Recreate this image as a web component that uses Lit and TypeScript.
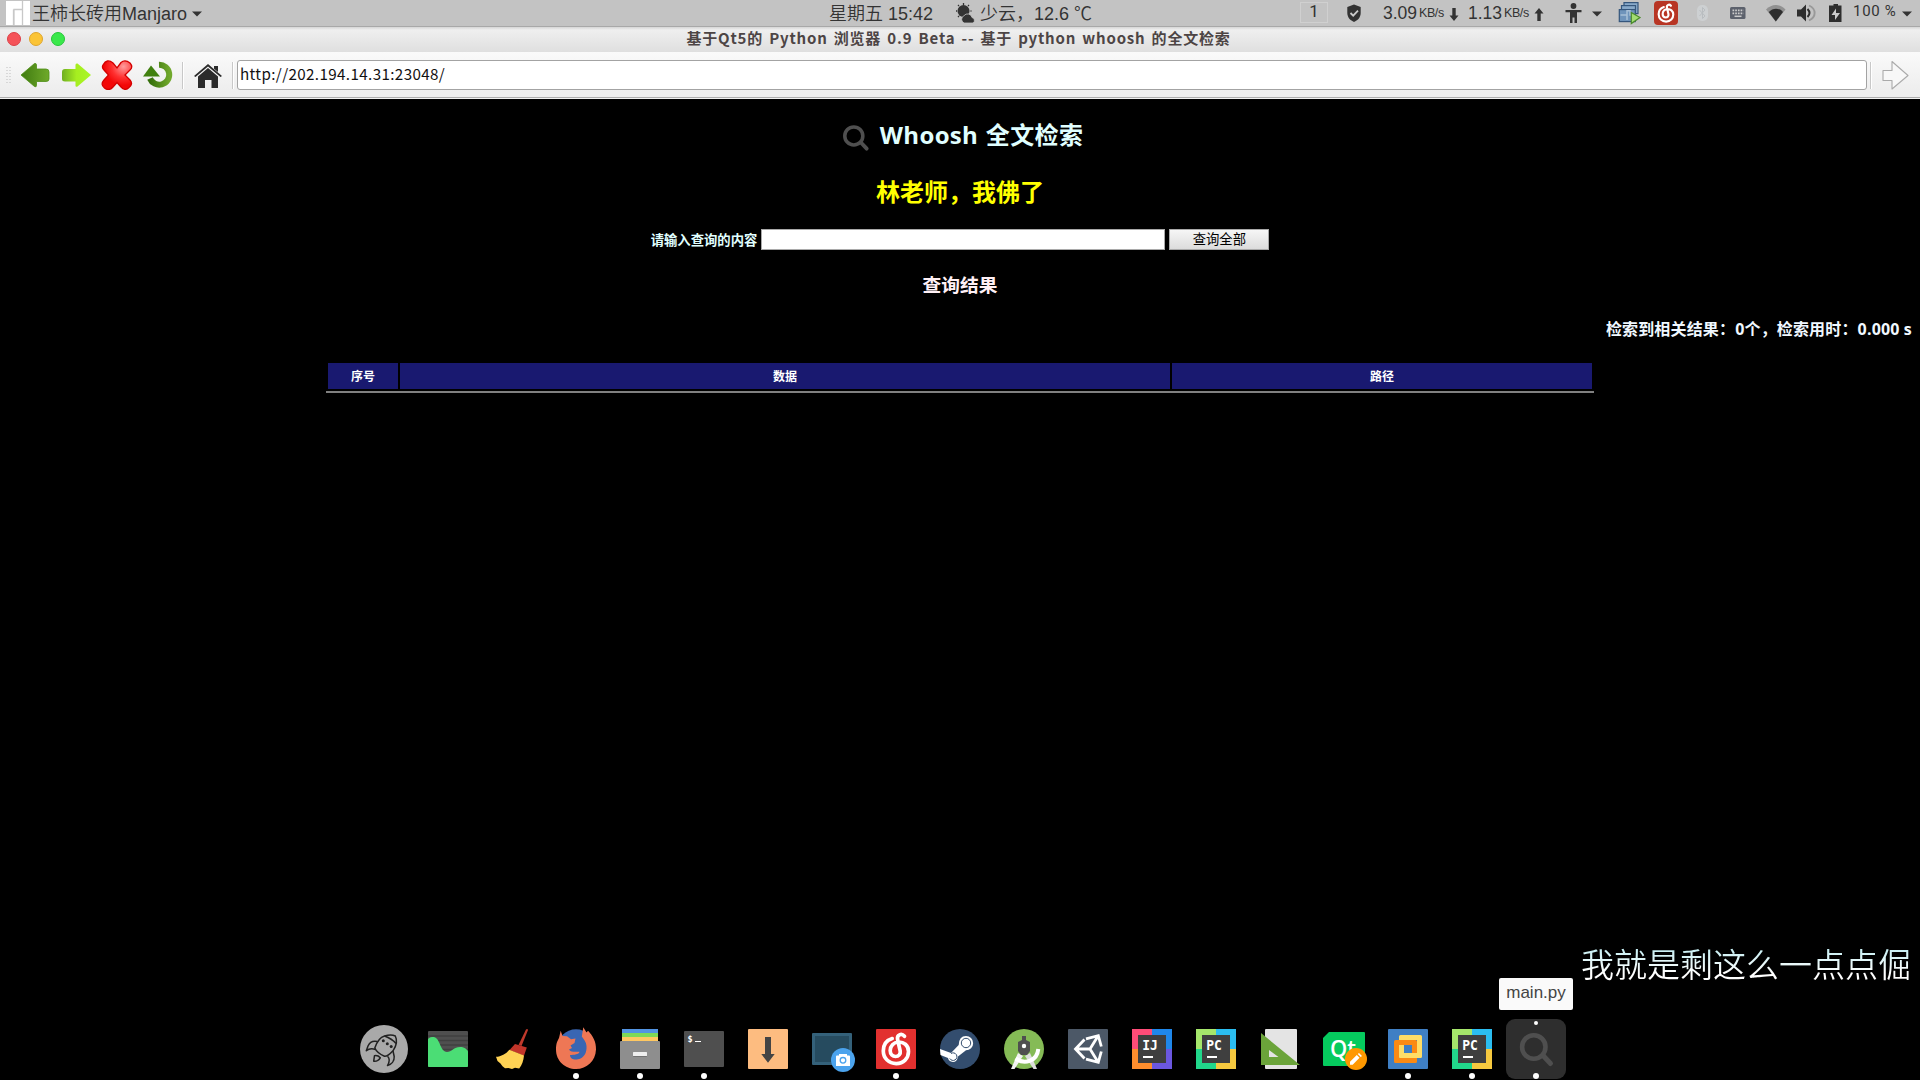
import { LitElement, html, svg, css } from "lit";
import { customElement, property } from "lit/decorators.js";

const ide = (tl: string, tr: string, bl: string, br: string, name: string) => svg`
  <rect x="4" y="4" width="20" height="20" fill=${tl} /><rect x="24" y="4" width="20" height="20" fill=${tr} />
  <rect x="4" y="24" width="20" height="20" fill=${bl} /><rect x="24" y="24" width="20" height="20" fill=${br} />
  <rect x="10" y="10" width="28" height="28" fill="#3f3f3f" />
  <text x="14.2" y="25.3" font-family="DejaVu Sans Mono, monospace" font-weight="700" font-size="13.4" textLength="15.6" lengthAdjust="spacingAndGlyphs" fill="#fff">${name}</text>
  <rect x="15" y="31" width="10" height="2" fill="#fff" />`;

const netease = svg`<path d="M20.2 13.6C14 15.500 11.300 20.500 11.300 26C11.300 33.300 17 38.600 24.200 38.600C31.500 38.600 36.500 33.300 36.500 26.500C36.500 20 31.500 16.800 26.500 17C21.500 17.200 18.200 21 18.200 25.600C18.200 29.500 20.800 31.500 23.500 31.500C26.800 31.500 28.700 29 28.200 26L25.600 14.500C24.600 9.800 29.500 7.800 32.500 11.300" fill="none" stroke="#fff" stroke-width="3.700" stroke-linecap="round" />`;

const glass = svg`<circle cx="21.800" cy="22" r="11.700" fill="none" stroke="#4f4f4f" stroke-width="4.600" /><path d="M31 30.500L38.500 38.500" stroke="#4f4f4f" stroke-width="5" stroke-linecap="round" />`;

const icons: Record<string, unknown> = {
  rocket: svg`<circle cx="24" cy="24" r="24" fill="#a9a9a9" />
    <g fill="none" stroke="#222" stroke-width="1.500" stroke-linejoin="round">
      <path d="M14.800 23C16.500 18 19 12.500 24.500 11C28 10 32 9.500 35.300 11C37.300 15 36.300 21 33 25.800C30.500 28.500 28 31.500 24.500 31.300C20.500 29.500 16.500 27 14.800 23Z" />
      <path d="M24.500 11C28.500 12.500 33 15 36 18.500" />
      <path d="M17.500 16.500C13 15.500 9.500 17.500 8 21L6.300 25.800C9 23.500 12.500 23.500 15.500 24.500M27.500 31.200C30 33.500 29.500 37 27.500 40.500C31.500 39.500 34.500 36 34.200 31.500L33 26M14.500 30.700L13.700 36.200C16.500 36.500 19 35 20.300 32.800C18.500 30.800 16.500 30.300 14.500 30.700Z" />
    </g><g fill="#222"><circle cx="23.300" cy="15.800" r="1.500" /><circle cx="27.300" cy="18.700" r="1.500" /><circle cx="31.200" cy="21.500" r="1.500" /></g>`,
  monitor: svg`<rect x="4" y="6" width="40" height="36" rx="1" fill="#4f4f4f" />
    <path d="M4 11h40M4 15.500h40M4 20h40M4 24.500h40" stroke="#404040" stroke-width="1.600" />
    <path d="M4 14C5.500 12.300 7.500 12 9.500 12C16 12 16 27 23 27C27.500 27 30 22 36 22C40 22 43 24 44 26.500V41Q44 42 43 42H5Q4 42 4 41Z" fill="#4bdd75" />`,
  broom: svg`<path d="M38 4.500Q39.500 3.300 40 5L33.500 21L30.500 20Z" fill="#c0392b" />
    <path d="M27 19L38.800 22.500L36 30.700L21.500 25Z" fill="#c2352a" />
    <path d="M21.300 24.700L36 30.500C35.500 36 34 40 31.200 43.500L27 42.700L24 44L20.500 43L17 43.300L14.500 41.300L12.500 38.500L9.500 36L8 31.800C13 31.500 18 29 21.300 24.700Z" fill="#ffd254" />`,
  firefox: svg`<circle cx="24" cy="23" r="18.800" fill="#3966b3" />
    <path d="M8.700 5.800L10.500 11L15 11.300L19 14.300L23.500 13.500L22.500 18L18.500 20.500L20 23L17 24.500C18.500 27.500 23 26.500 27.500 26.800C27 29.500 22 30 18 30C18 34 22 35 26 34.300C32 33 35 28 34.500 21C34.300 17 32 14.500 29.800 11.500L31.300 2.300L34.500 7.500L36 5.800C41 11 44.200 17 44 24.500C43.500 36 35 44 24 44C13 44 4 36 4 24.500C4 18 5.500 16 7 13Z" fill="#ee7755" />`,
  files: svg`<rect x="6" y="4" width="36" height="4" fill="#5294e2" /><rect x="6" y="8" width="36" height="4" fill="#7ed957" /><rect x="6" y="12" width="36" height="5" fill="#ffc861" />
    <rect x="4" y="16" width="40" height="28" rx="1" fill="#8e8e8e" /><rect x="17" y="28" width="14" height="4" rx="1" fill="#717171" /><rect x="17" y="27" width="14" height="4" rx=".5" fill="#eee" />`,
  terminal: svg`<rect x="4" y="6" width="40" height="36" rx="1" fill="#4f4f4f" />
    <text x="7.500" y="17" font-family="DejaVu Sans Mono, monospace" font-weight="700" font-size="8.500" fill="#fff">$</text><rect x="15" y="16" width="6" height="1" fill="#fff" />`,
  download: svg`<rect x="4" y="4" width="40" height="40" rx="1" fill="#fdbc80" /><path d="M21 12h6v17h3.700L24 37.800L17.300 29H21Z" fill="#444" />`,
  shot: svg`<rect x="4" y="8" width="40" height="32" rx="1" fill="#34617a" /><rect x="7" y="11" width="34" height="26" fill="#264b5f" />
    <circle cx="35" cy="35" r="12" fill="#4ba3ed" /><path d="M28 31.500Q28 30.500 29 30.500H31V29H39V30.500H41Q42 30.500 42 31.500V41H28Z" fill="#fff" /><circle cx="35" cy="35.300" r="2.800" fill="none" stroke="#4ba3ed" stroke-width="1.300" />`,
  music: svg`<rect x="4" y="4" width="40" height="40" rx="1" fill="#e2302f" />${netease}`,
  steam: svg`<circle cx="24" cy="24" r="20" fill="#334d6e" />
    <path d="M4 24L15 28L22.700 20Q23 11 30 11A7 7 0 0 1 30 25.300L22 31.500Q21 37 17 37Q12.500 36.500 12 33L4.500 30Z" fill="#fff" />
    <circle cx="30" cy="18" r="4.700" fill="none" stroke="#334d6e" stroke-width="1" /><path d="M15 28.500A3.800 3.800 0 1 1 13.800 33.500" fill="none" stroke="#334d6e" stroke-width="1" />`,
  studio: svg`<circle cx="24" cy="24" r="20" fill="#85bb56" />
    <path d="M18 28L11 44H14.500L23 31Z" fill="#f2f2f2" /><path d="M30 28L37 44H33.500L25 31Z" fill="#ddd" />
    <path d="M15.500 33.500C24 39.500 37 37 38.300 24" fill="none" stroke="#fff" stroke-width="4" />
    <path d="M22 11H26V15L30 17V26L27 30H21L18 26V17L22 15Z" fill="#4f4f4f" /><circle cx="24" cy="21" r="2.200" fill="#fff" />`,
  unity: svg`<rect x="4" y="4" width="40" height="40" rx="1" fill="#4c5867" />
    <g fill="none" stroke="#fff" stroke-width="2.800"><path d="M26 24H12M20.500 14.500L11.500 24L20.500 33.500M22 13.800L34.300 10.700L37.300 21.500M26 24L34 11M22 34.200L34.300 37.300L37.300 26.500M26 24L34 37" /></g>`,
  idea: ide("#ff4c78", "#1f87ea", "#ff8e2d", "#6b57e0", "IJ"),
  pycharm: ide("#a5e66b", "#2bbdf0", "#21d78b", "#f6c93f", "PC"),
  triangle: svg`<rect x="9" y="4" width="32" height="40" rx="1" fill="#e4e4e4" /><path d="M5 8L44 40H5ZM13 25V32H22.500Z" fill="#6ba43a" fill-rule="evenodd" />`,
  qt: svg`<path d="M9 7H44Q45 7 45 8V40Q45 41 44 41H4Q3 41 3 40V13Z" fill="#05cb5e" />
    <text x="10" y="32" font-family="Open Sans, sans-serif" font-weight="600" font-size="24" textLength="26" lengthAdjust="spacingAndGlyphs" fill="#fff">Qt</text>
    <circle cx="36" cy="34" r="11" fill="#ff9800" /><path d="M30 39.800V36.800L36.800 30L39.500 32.700L32.700 39.800ZM37.800 29L39 28L42 31L40.700 31.900Z" fill="#fff" />`,
  vmware: svg`<rect x="4" y="4" width="40" height="40" rx="1" fill="#3f7fc4" />
    <path d="M16.500 10H36.500Q38 10 38 11.500V31.500Q38 33 36.500 33H16.500Q15 33 15 31.500V11.500Q15 10 16.500 10ZM20 15V28H33V15Z" fill="#ffdd67" fill-rule="evenodd" />
    <path d="M11.500 15H31.500Q33 15 33 16.500V28H28V20H15V33H33V36.500Q33 38 31.500 38H11.500Q10 38 10 36.500V16.500Q10 15 11.500 15Z" fill="#fb8a14" fill-rule="evenodd" />
    <path d="M15 20H20V28H33V33H16.500Q15 33 15 31.500Z" fill="#ffdd67" />`,
  search: glass,
};

@customElement("dock-item")
class DockItem extends LitElement {
  @property() name = "";
  @property({ type: Boolean }) running = false;
  @property({ type: Boolean }) active = false;
  static styles = css`
    :host { display: block; width: 64px; }
    .cell { width: 60px; height: 60px; margin: 0 2px; border-radius: 9px; display: flex; flex-direction: column; align-items: center; }
    .active { background: #2e2e2e; }
    .top { width: 4px; height: 4px; margin: 2px 0 0; border-radius: 50%; }
    .active .top { background: #fff; }
    svg { display: block; width: 48px; height: 48px; }
    .dot { width: 6px; height: 6px; border-radius: 50%; }
    .on { background: #fff; }
  `;
  render() {
    return html`<div class="cell ${this.active ? "active" : ""}">
      <div class="top"></div><svg viewBox="0 0 48 48">${icons[this.name]}</svg>
      <div class="dot ${this.running ? "on" : ""}"></div>
    </div>`;
  }
}

@customElement("system-bar")
class SystemBar extends LitElement {
  static styles = css`
    :host { display: block; }
    .bar { height: 27px; display: flex; background: #c3c3c3; border-bottom: 1px solid #a8a8a8; box-sizing: border-box; color: #333;
      font: 350 18px/24px "Liberation Sans", "Noto Sans CJK SC", sans-serif; white-space: nowrap; }
    svg { display: block; flex: none; height: 26px; }
    .logo { width: 32px; }
    .user { width: 160px; padding-top: 2px; }
    .caret { width: 10px; }
    .date { width: 126px; margin-left: 627px; padding-top: 2px; }
    .sun { width: 22px; margin-right: 3px; }
    .weather { width: 320px; padding-top: 2px; white-space: pre; }
    .space { width: 26px; height: 19px; line-height: 17px; border: 1px solid #d0d0d0; margin: 2px 16px 0 0; text-align: center; font-size: 17px; font-family: Roboto, sans-serif; font-weight: 400; }
    .shield { width: 20px; margin-right: 19px; }
    .rate { width: 36px; padding-top: 1px; font-size: 17.500px; }
    .unit { width: 26px; padding-top: 1px; font-size: 12.500px; letter-spacing: -.4px; }
    .arrow { width: 10px; margin: 0 9px 0 4px; }
    .person { width: 18px; margin: 0 10px 0 11px; }
    .stack { width: 24px; margin: 0 12px 0 16px; }
    .cloud { width: 24px; }
    .blue { width: 14px; margin-left: 17px; }
    .keys { width: 16px; margin-left: 21px; }
    .wifi { width: 20px; margin-left: 20px; }
    .vol { width: 20px; margin-left: 10px; }
    .batt { width: 14px; margin-left: 13px; }
    .pct { width: 43px; margin: 0 6px 0 10px; font: 400 15px/22px Roboto, sans-serif; letter-spacing: .7px; }
  `;
  caret = html`<svg class="caret" viewBox="0 0 10 26"><path d="M0 11.500H10L5 16.500Z" fill="#333" /></svg>`;
  render() {
    return html`<div class="bar">
      <svg class="logo" viewBox="0 0 32 26"><rect x="6" y="1" width="24" height="24" fill="#fff" /><path d="M14 25V9.500H22.500M22.500 25V1M13.500 9.500V25M22.500 9V1" fill="none" stroke="#c8c8c8" stroke-width="1.300" /></svg>
      <div class="user">王柿长砖用Manjaro</div>${this.caret}
      <div class="date">星期五 15:42</div>
      <svg class="sun" viewBox="0 0 22 26" fill="#333"><circle cx="8.500" cy="11" r="6" /><path d="M8.500 3V5M1 11H2M3 5L4 6M14 5L13 6M3 17L4 16M15.500 11H16.500" stroke="#333" stroke-width="1.300" /><path d="M9 23A4 4 0 0 1 9 15.700A4.500 4.500 0 0 1 17 17.500A3 3 0 0 1 18 23Z" stroke="#c3c3c3" stroke-width=".8" /></svg>
      <div class="weather">少云，12.6 ℃</div>
      <div class="space">1</div>
      <svg class="shield" viewBox="0 0 20 26"><path d="M10 4.500L16.700 7V13C16.700 17.500 13.500 20.500 10 22C6.500 20.500 3.300 17.500 3.300 13V7Z" fill="#333" /><path d="M6.500 13L9.200 15.700L14 10.700" fill="none" stroke="#ccc" stroke-width="1.800" /></svg>
      <div class="rate">3.09</div><div class="unit">KB/s</div>
      <svg class="arrow" viewBox="0 0 10 26"><path d="M3.300 8H6.700V15.500H9.500L5 21L.5 15.500H3.300Z" fill="#333" /></svg>
      <div class="rate">1.13</div><div class="unit">KB/s</div>
      <svg class="arrow" viewBox="0 0 10 26"><path d="M3.300 21H6.700V13.500H9.500L5 8L.5 13.500H3.300Z" fill="#333" /></svg>
      <svg class="person" viewBox="0 0 18 26" fill="#333"><circle cx="9.500" cy="6" r="2.900" /><path d="M1.500 10H17.500V12.300H13V23H10.500V17.500H8.500V23H6V12.300H1.500Z" /></svg>
      ${this.caret}
      <svg class="stack" viewBox="0 0 24 26"><g fill="#88a9c9" stroke="#35567c" stroke-width="1.200"><rect x="6" y="2.600" width="14" height="11" /><rect x="3.500" y="5.600" width="14" height="11" /><rect x="1.300" y="9.600" width="16" height="12" fill="#6f94bb" /></g><path d="M2.500 15H9V10.800H12V15H16M9 15V20" fill="none" stroke="#a8c0d8" stroke-width="1.500" /><path d="M13.300 12.500V23.500L22 17.500Z" fill="#a3dc72" stroke="#4a8b2a" stroke-width="1.200" /></svg>
      <svg class="cloud" viewBox="0 0 24 26"><rect y="1" width="24" height="24" rx="4" fill="#b83524" /><g transform="translate(-1.900 -.8) scale(.58)">${netease}</g></svg>
      <svg class="blue" viewBox="0 0 14 26"><rect x="2" y="5" width="11" height="16" rx="5" fill="#cdd0d2" /><path d="M4.500 10L10 16L7.500 18.500V7.500L10 10L4.500 16" fill="none" stroke="#b9bdc0" /></svg>
      <svg class="keys" viewBox="0 0 16 26"><rect y="7" width="15.500" height="12" rx="1.500" fill="#5c616c" /><path d="M2.500 10.300H13.500M2.500 13.300H13.500" stroke="#ccc" stroke-width="1.800" stroke-dasharray="1.700 1" /><path d="M4.500 16.300H11.500" stroke="#ccc" stroke-width="1.500" /></svg>
      <svg class="wifi" viewBox="0 0 20 26"><path d="M0 9.500C5.500 3.500 14.500 3.500 19.500 9.500L9.800 21.500Z" fill="#919191" /><path d="M2.700 12C7 7.500 13 7.500 17 12L9.800 21.500Z" fill="#2e2e2e" /></svg>
      <svg class="vol" viewBox="0 0 20 26"><path d="M1 9.500H5L10 4.500V21.500L5 16.500H1Z" fill="#2e2e2e" /><path d="M11.500 9Q15.500 13 11.500 17" fill="none" stroke="#2e2e2e" stroke-width="2" /><path d="M13 5.500C20.500 9 20.500 17 13 20.500" fill="none" stroke="#999" stroke-width="1.900" /></svg>
      <svg class="batt" viewBox="0 0 14 26"><path d="M4.500 4H9V5.500H12.500V22H0V5.500H4.500Z" fill="#2e2e2e" /><path d="M7 8.500V13H11L6 20V15H2.500Z" fill="#ccc" /></svg>
      <div class="pct">100 %</div>${this.caret}
    </div>`;
  }
}

@customElement("browser-chrome")
class BrowserChrome extends LitElement {
  static styles = css`
    :host { display: block; }
    .title { height: 25px; display: flex; align-items: center; background: linear-gradient(#d6d6d6, #efefef 3px, #dfdfdf); }
    .lights { display: flex; gap: 8px; padding-left: 7px; width: 680.500px; box-sizing: border-box; margin-top: -1px; }
    .light { width: 12px; height: 12px; border: 1px solid #dc4047; background: #f55359; border-radius: 50%; }
    .min { background: #fbc436; border-color: #dfa52c; }
    .max { background: #3ae84b; border-color: #25c638; }
    .name { font: 700 15px/20px "Noto Sans CJK SC", sans-serif; letter-spacing: .8px; word-spacing: 2px; color: #4d4545; white-space: nowrap; margin: -4px 0 0 6px; }
    .tools { height: 46px; box-sizing: border-box; display: flex; align-items: flex-start; padding: 8px 9px 0 5px; background: linear-gradient(#fafafa, #ededed 90%); border-bottom: 1px solid #acacac; }
    svg { display: block; flex: none; height: 30px; }
    .edge { height: 1px; background: #f0f0f0; }
    .grip { width: 8px; margin-right: 7px; }
    .back { width: 30px; margin-right: 11px; }
    .stop { width: 32px; margin: 0 9px 0 -1px; }
    .reload { width: 32px; }
    .sep { flex: none; width: 1px; height: 27px; margin: 2px 0 0; background: #c8c8c8; border-right: 1px solid #fff; }
    .s1 { margin-left: 8px; }
    .home { width: 30px; margin: 0 9px; }
    .url { box-sizing: border-box; flex: 1; height: 30px; margin-left: 3px; border: 1px solid #a3a3a3; border-radius: 3px; background: #fff; padding-left: 2px; font: 15.200px/25px "Noto Sans CJK SC", sans-serif; letter-spacing: .37px; color: #111; }
    .s2 { margin-left: 3px; }
    .go { width: 30px; margin-left: 9px; }
  `;
  render() {
    return html`<div class="title"><div class="lights"><i class="light"></i><i class="light min"></i><i class="light max"></i></div>
      <div class="name">基于Qt5的 Python 浏览器 0.9 Beta -- 基于 python whoosh 的全文检索</div></div>
    <div class="tools">
      <svg class="grip" viewBox="0 0 8 30"><path d="M2 7V24M5 7V24" stroke="#bdbdbd" stroke-dasharray="1 2" /></svg>
      <svg class="back" viewBox="0 0 30 30"><defs><linearGradient id="g"><stop stop-color="#3f7a10" /><stop offset="1" stop-color="#6faa2a" /></linearGradient></defs><path d="M1 15L14.500 3.500Q16.500 3 16.500 5V9H26Q29 9 29 12V19Q29 21.500 26 21.500H16.500V25.500Q16.500 27.500 14.500 26.500Z" fill="url(#g)" stroke="#4f8f18" stroke-width=".8" /></svg>
      <svg class="back" viewBox="0 0 30 30"><defs><linearGradient id="h"><stop stop-color="#6fae20" /><stop offset=".5" stop-color="#a6ee20" /><stop offset="1" stop-color="#a9f626" /></linearGradient></defs><path d="M30 15L16.500 3.500Q14.500 3 14.500 5V9H4Q1 9 1 12V19Q1 21.500 4 21.500H14.500V25.500Q14.500 27.500 16.500 26.500Z" fill="url(#h)" /></svg>
      <svg class="stop" viewBox="0 0 32 30"><defs><radialGradient id="x" cx=".72" cy=".2" r=".65"><stop stop-color="#ff9c9c" /><stop offset=".6" stop-color="#ff3030" /><stop offset="1" stop-color="#f30808" /></radialGradient></defs><path d="M2 5Q6-2 12 3L16 8L20 2.500Q24-1 29 3Q32.500 7 29 10L24 15L29 20Q32.500 24 28 27.500Q24 31.500 20 27L16 22.500L12 27Q8 31.500 3.500 28Q-1 24.500 3 20L7.500 15L3 10Q.5 7.500 2 5Z" fill="url(#x)" stroke="#d40000" stroke-width="1.300" /></svg>
      <svg class="reload" viewBox="0 0 32 30"><defs><linearGradient id="r"><stop stop-color="#356f0b" /><stop offset="1" stop-color="#70a82c" /></linearGradient></defs><path d="M17 4.700A10 10 0 1 1 8 18.500" fill="none" stroke="url(#r)" stroke-width="6" /><path d="M1 16.500L9 5.500L18 16.500Z" fill="#40800f" /></svg>
      <div class="sep s1"></div>
      <svg class="home" viewBox="0 0 30 30" fill="#2b2b2b"><path d="M1 16L15 4L29 16L27.500 17L15 6.500L2.500 17Z" /><path d="M15 8L25 16.500V28H18.500V20H12V28H5V16.500Z" /><path d="M21 6H25V12L21 8.700Z" /></svg>
      <div class="sep"></div>
      <div class="url">http://202.194.14.31:23048/</div>
      <div class="sep s2"></div>
      <svg class="go" viewBox="0 0 30 30"><path d="M2 10.500H11V1.500L27 15.500L11 29V20.500H2Z" fill="#f8f8f8" stroke="#aaa" stroke-width="1.100" stroke-linejoin="round" /></svg>
    </div><div class="edge"></div>`;
  }
}

@customElement("app-root")
class AppRoot extends LitElement {
  static styles = css`
    :host { display: block; width: 1920px; height: 1080px; overflow: hidden; background: #000; }
    .screen { height: 1080px; display: flex; flex-direction: column; }
    .page { flex: 1; display: flex; flex-direction: column; align-items: center; font-family: "Open Sans", "Noto Sans CJK SC", sans-serif; font-weight: 700; white-space: nowrap; }
    .head { height: 36px; margin-top: 18px; display: flex; align-items: center; color: #e0ffff; font-size: 24px; line-height: 32px; letter-spacing: .35px; word-spacing: 1px; }
    .glass { width: 37px; height: 37px; margin: 4px 6px 0 0; }
    .yellow { color: #ff0; font-size: 24px; line-height: 32px; margin-top: 23px; }
    .form { display: flex; height: 21px; margin-top: 21px; align-items: center; font-size: 13.330px; color: #e0ffff; }
    .box { width: 404px; height: 21px; box-sizing: border-box; border: 1px solid #a9a9a9; background: #fff; margin: 0 4px; }
    .btn { width: 100px; height: 21px; box-sizing: border-box; border: 1px solid #a9a9a9; background: linear-gradient(#f6f6f6, #dcdcdc); color: #000; font: 400 13.330px/18px "Noto Sans CJK SC", sans-serif; text-align: center; }
    .result { color: #fff0f5; font-size: 18.720px; line-height: 26px; margin-top: 22px; }
    .count { align-self: flex-end; margin: 19px 8px 0 0; font-size: 16px; line-height: 24px; letter-spacing: .16px; color: #f0f8ff; }
    .table { width: 1268px; margin-top: 22px; box-sizing: border-box; padding: 0 2px 2px; display: grid; grid-template-columns: 70px 770px 420px; gap: 2px; border-bottom: 2px solid #808080; color: #fff; }
    .th { height: 26px; background: #191970; font-size: 12px; line-height: 28px; text-align: center; }
    .lyric { position: absolute; left: 1581px; top: 938px; font: 350 33px/50px "Noto Sans CJK SC", sans-serif; color: transparent; background: linear-gradient(#c4eef2 10px, #fff 35px); -webkit-background-clip: text; background-clip: text; white-space: nowrap; }
    .tip { position: absolute; left: 1499px; top: 978px; width: 74px; height: 32px; background: #fafafa; border-radius: 2px; color: #444; font: 17px/29px "Liberation Sans", sans-serif; text-align: center; }
    .dock { display: flex; justify-content: center; height: 61px; }
  `;
  dock: [string, boolean][] = [
    ["rocket", false], ["monitor", false], ["broom", false], ["firefox", true], ["files", true], ["terminal", true],
    ["download", false], ["shot", false], ["music", true], ["steam", false], ["studio", false], ["unity", false],
    ["idea", false], ["pycharm", false], ["triangle", false], ["qt", false], ["vmware", true], ["pycharm", true], ["search", true],
  ];
  render() {
    return html`<div class="screen">
      <system-bar></system-bar><browser-chrome></browser-chrome>
      <div class="page">
        <div class="head"><svg class="glass" viewBox="0 0 48 48">${glass}</svg><span>Whoosh 全文检索</span></div>
        <div class="yellow">林老师，我佛了</div>
        <div class="form"><span>请输入查询的内容</span><div class="box"></div><div class="btn">查询全部</div></div>
        <div class="result">查询结果</div>
        <div class="count">检索到相关结果：0个，检索用时：0.000 s</div>
        <div class="table"><div class="th">序号</div><div class="th">数据</div><div class="th">路径</div></div>
      </div>
      <div class="dock">${this.dock.map(([n, on]) => html`<dock-item .name=${n} .running=${on} .active=${n === "search"}></dock-item>`)}</div>
    </div>
    <div class="lyric">我就是剩这么一点点倔</div>
    <div class="tip">main.py</div>`;
  }
}
